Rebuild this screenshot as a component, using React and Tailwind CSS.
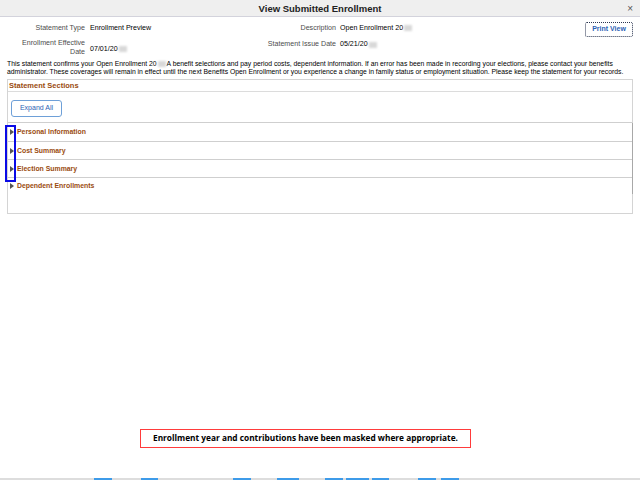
import React from 'react'

const BROWN = 'text-[#9a4b0e]'

const Masked = () => (
  <span className="inline-block w-[8px] h-[6px] bg-[#d8d8d8] blur-[1px] align-middle mx-[1px]" />
)

const Arrow = () => (
  <span className="w-0 h-0 border-y-[3px] border-y-transparent border-l-[4px] border-l-[#555] mr-[3px]" />
)

const sections = [
  { label: 'Personal Information', h: 'h-[19px]' },
  { label: 'Cost Summary', h: 'h-[18px]' },
  { label: 'Election Summary', h: 'h-[18px]' },
]

// bottom strip: [width, isBlue]
const strip = [
  [94, 0], [18, 1], [29, 0], [17, 1], [75, 0], [18, 1], [26, 0], [22, 1], [26, 0], [18, 1],
  [3, 0], [23, 1], [3, 0], [17, 1], [29, 0], [18, 1], [5, 0], [18, 1],
]

export default function App() {
  return (
    <div className="w-[640px] h-[480px] flex flex-col bg-white font-['Liberation_Sans',Arial,sans-serif] overflow-hidden">
      {/* title bar */}
      <div className="h-[17px] shrink-0 flex items-center bg-[#efefef] border-b border-[#d3d3dc] relative">
        <div className="flex-1 text-center text-[9.5px] font-bold text-[#222] leading-none pt-[1px]">
          View Submitted Enrollment
        </div>
        <span className="absolute right-[7px] top-[4px] text-[10px] leading-none text-[#555]">×</span>
      </div>

      {/* summary */}
      <div className="flex pr-[7px]">
        <div className="grid grid-cols-[85px_171px_72px_1fr] gap-x-[4px] gap-y-[7px] flex-1 pt-[7px] text-[7.1px] leading-[8.4px]">
          <div className="text-right text-[#4d4d4d] self-center">Statement Type</div>
          <div className="text-black self-center pl-[1px]">Enrollment Preview</div>
          <div className="text-right text-[#4d4d4d] self-center">Description</div>
          <div className="text-black self-center">
            Open Enrollment 20<Masked />
          </div>

          <div className="text-right text-[#4d4d4d]">
            Enrollment Effective
            <br />
            Date
          </div>
          <div className="text-black self-center pl-[1px] pt-[3px]">
            07/01/20<Masked />
          </div>
          <div className="text-right text-[#4d4d4d] self-start pt-[1px] whitespace-nowrap">Statement Issue Date</div>
          <div className="text-black self-start pt-[1px]">
            05/21/20<Masked />
          </div>
        </div>
        <button className="self-start mt-[5px] w-[48px] h-[15px] rounded-[2px] border border-dotted border-[#2a3550] bg-white text-[7px] text-[#2b62b5] font-bold">
          Print View
        </button>
      </div>

      {/* intro paragraph */}
      <p className="px-[7px] mt-[4px] text-[6.8px] leading-[8px] text-black">
        This statement confirms your Open Enrollment 20<Masked />A benefit selections and pay period costs, dependent information. If an error has been made in recording your elections, please contact your benefits administrator. These coverages will remain in effect until the next Benefits Open Enrollment or you experience a change in family status or employment situation. Please keep the statement for your records.
      </p>

      {/* statement sections */}
      <div className="mx-[7px] mt-[3px] border border-[#d4d4d4] w-[626px] h-[135px] flex flex-col">
        <div className={`h-[12px] border-b border-[#dcdcdc] flex items-center px-[1px] text-[7.5px] font-bold ${BROWN}`}>
          Statement Sections
        </div>
        <div className="h-[31px] border-b border-[#cfcfcf] flex items-center px-[3px]">
          <button className="mt-[2px] w-[51px] h-[17px] rounded-[3px] border border-[#6ea0d8] bg-white text-[7px] text-[#2b62b5]">
            Expand All
          </button>
        </div>
        <div className="relative border-r border-[#a8a8a8] mr-[-1px]">
          {sections.map((s) => (
            <div
              key={s.label}
              className={`${s.h} border-b border-[#cfcfcf] flex items-center pl-[2px] text-[6.9px] font-bold ${BROWN}`}
            >
              <Arrow />
              {s.label}
            </div>
          ))}
          <div className={`h-[16px] flex items-center pl-[2px] text-[6.9px] font-bold ${BROWN}`}>
            <Arrow />
            Dependent Enrollments
          </div>
          <div className="absolute left-[-3px] top-[2px] w-[11px] h-[57px] border-2 border-[#0a0ae6]" />
        </div>
      </div>

      {/* notice */}
      <div className="mt-auto mb-[30px] self-start ml-[140px] w-[331px] h-[19px] border border-[#ff3b3b] flex items-center justify-center font-['Open_Sans',sans-serif] text-[8.3px] font-bold text-black">
        Enrollment year and contributions have been masked where appropriate.
      </div>

      {/* bottom strip */}
      <div className="h-[2px] flex bg-[#dddddd] shrink-0">
        {strip.map(([w, blue], i) => (
          <span key={i} className={blue ? 'bg-[#3d9be9]' : 'bg-[#dddddd]'} style={{ width: w }} />
        ))}
      </div>
    </div>
  )
}
